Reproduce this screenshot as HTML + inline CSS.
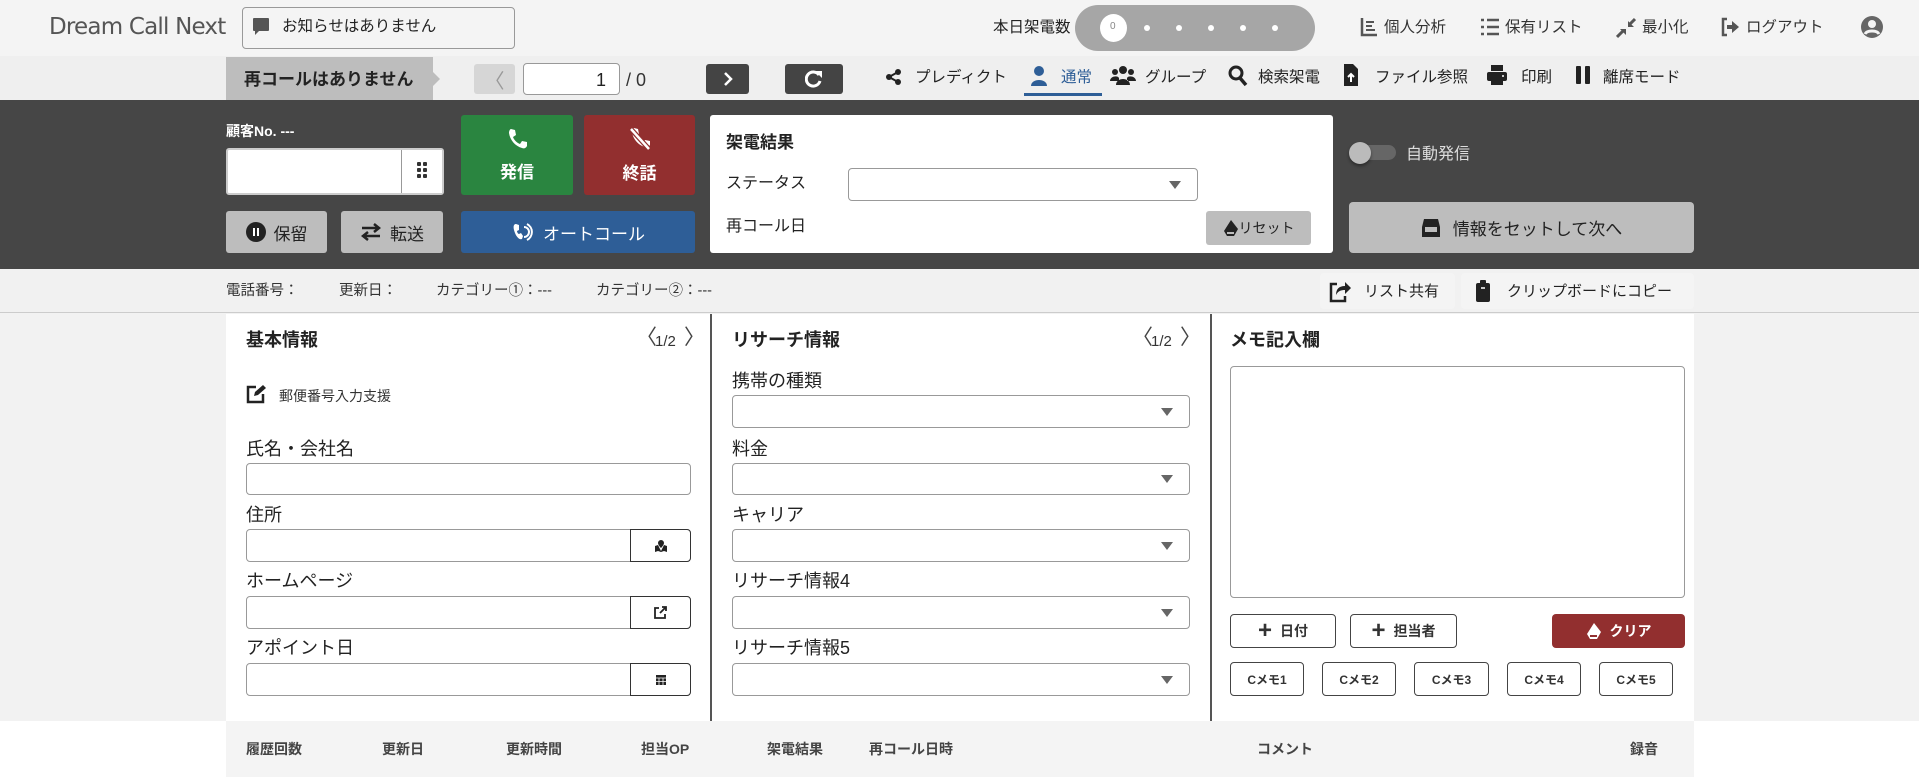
<!DOCTYPE html>
<html><head><meta charset="utf-8"><style>
*{box-sizing:border-box;margin:0;padding:0}
body{width:1919px;height:777px;position:relative;overflow:hidden;background:#f2f2f2;font-family:"Liberation Sans","Noto Sans CJK JP",sans-serif;color:#222;font-size:15px}
.a{position:absolute}
.t{position:absolute;white-space:nowrap;line-height:1}
.btn{position:absolute;display:flex;align-items:center;justify-content:center;border-radius:3px}
.inp{position:absolute;background:#fff;border:1px solid #999;border-radius:4px}
.ib{position:absolute;background:#fff;border:1px solid #333;border-radius:0 4px 4px 0;display:flex;align-items:center;justify-content:center}
.tri{position:absolute;right:16px;top:50%;margin-top:-4px;border-left:6px solid transparent;border-right:6px solid transparent;border-top:8px solid #666}
.ob{position:absolute;background:#fff;border:1px solid #444;border-radius:4px;display:flex;align-items:center;justify-content:center;font-size:13px;font-weight:bold;color:#333}
.lab{position:absolute;font-size:18px;color:#222;white-space:nowrap;line-height:1}
.nv{position:absolute;white-space:nowrap;line-height:1;font-size:15.5px;color:#222;top:70px}
</style></head><body>
<div class="a" style="left:0;top:0;width:1919px;height:56px;background:#f4f4f4"></div>
<div class="t" style="left:49px;top:16px;font-size:23px;color:#555;font-family:'DejaVu Sans',sans-serif;letter-spacing:-0.8px">Dream Call Next</div>
<div class="a" style="left:242px;top:7px;width:273px;height:42px;border:1px solid #999;border-radius:4px;background:#f4f4f4"></div>
<svg class="a" style="left:252px;top:17px" width="18" height="20" viewBox="0 0 18 20"><path d="M2 1h14a1 1 0 0 1 1 1v11a1 1 0 0 1-1 1H7l-4 4v-4H2a1 1 0 0 1-1-1V2a1 1 0 0 1 1-1z" fill="#555"/></svg>
<div class="t" style="left:282px;top:19px;font-size:15.5px">お知らせはありません</div>
<div class="t" style="left:993px;top:20px;font-size:15.5px">本日架電数</div>
<div class="a" style="left:1075px;top:5px;width:240px;height:46px;border-radius:23px;background:#a6a6a6"></div>
<div class="a" style="left:1100px;top:14px;width:27px;height:28px;border-radius:50%;background:#fff"></div>
<div class="t" style="left:1110px;top:22px;font-size:10px;color:#888">0</div>
<div class="a" style="left:1144px;top:25px;width:6px;height:6px;border-radius:50%;background:#fff;box-shadow:32px 0 #fff,64px 0 #fff,96px 0 #fff,128px 0 #fff"></div>
<svg class="a" style="left:1360px;top:17px" width="18" height="20"><path d="M2 1v17h15" stroke="#555" stroke-width="2.5" fill="none"/><path d="M6 5h8M6 9h6M6 13h9" stroke="#555" stroke-width="2"/></svg>
<div class="t" style="left:1384px;top:20px;font-size:15.5px;color:#333">個人分析</div>
<svg class="a" style="left:1480px;top:18px" width="20" height="18"><path d="M1 2h3M7 2h12M1 9h3M7 9h12M1 16h3M7 16h12" stroke="#555" stroke-width="2.5"/></svg>
<div class="t" style="left:1505px;top:20px;font-size:15.5px;color:#333">保有リスト</div>
<svg class="a" style="left:1616px;top:17px" width="20" height="22"><path d="M1 20l7-7M19 2l-6 6" stroke="#555" stroke-width="3"/><path d="M4 12h6v6zM18 10h-6V4z" fill="#555"/></svg>
<div class="t" style="left:1642px;top:20px;font-size:15.5px;color:#333">最小化</div>
<svg class="a" style="left:1720px;top:17px" width="20" height="20"><path d="M7 2H3v16h4" stroke="#555" stroke-width="2.5" fill="none"/><path d="M7 8h5V4l7 6-7 6v-4H7z" fill="#555"/></svg>
<div class="t" style="left:1746px;top:20px;font-size:15.5px;color:#333">ログアウト</div>
<svg class="a" style="left:1861px;top:16px" width="22" height="22"><circle cx="11" cy="11" r="11" fill="#666"/><circle cx="11" cy="8" r="4" fill="#f4f4f4"/><path d="M4 18c2-4 12-4 14 0" stroke="#f4f4f4" stroke-width="3" fill="none"/></svg>
<div class="a" style="left:0;top:56px;width:1919px;height:44px;background:#efefef"></div>
<div class="a" style="left:226px;top:57px;width:207px;height:43px;background:#bdbdbd"></div>
<div class="a" style="left:433px;top:72px;border-top:7px solid transparent;border-bottom:7px solid transparent;border-left:7px solid #bdbdbd"></div>
<div class="t" style="left:244px;top:71px;font-size:17px;font-weight:bold;color:#222">再コールはありません</div>
<div class="btn" style="left:474px;top:64px;width:41px;height:30px;background:#d6d6d6;color:#999;font-size:20px">〈</div>
<div class="inp" style="left:523px;top:63px;width:97px;height:32px;border-radius:4px"></div>
<div class="t" style="left:596px;top:71px;font-size:18px">1</div>
<div class="t" style="left:626px;top:71px;font-size:18px;color:#333">/ 0</div>
<div class="btn" style="left:706px;top:64px;width:43px;height:30px;background:#444"><svg width="12" height="16"><path d="M3 2l6 6-6 6" stroke="#fff" stroke-width="2.5" fill="none"/></svg></div>
<div class="btn" style="left:785px;top:64px;width:58px;height:30px;background:#444"><svg width="18" height="18"><path d="M14 5a7 7 0 1 0 1 6" stroke="#fff" stroke-width="3" fill="none"/><path d="M10 1h7v7z" fill="#fff"/></svg></div>
<svg class="a" style="left:885px;top:68px" width="18" height="18"><circle cx="4" cy="9" r="3" fill="#222"/><circle cx="13" cy="4" r="3" fill="#222"/><circle cx="13" cy="14" r="3" fill="#222"/><path d="M4 9L13 4M4 9l9 5" stroke="#222" stroke-width="2"/></svg>
<div class="nv" style="left:915px">プレディクト</div>
<svg class="a" style="left:1030px;top:65px" width="18" height="22"><circle cx="9" cy="6" r="5" fill="#2e5e97"/><path d="M1 21c0-8 16-8 16 0z" fill="#2e5e97"/></svg>
<div class="nv" style="left:1061px;color:#2e5e97">通常</div>
<div class="a" style="left:1024px;top:93px;width:78px;height:3px;background:#2e5e97"></div>
<svg class="a" style="left:1110px;top:65px" width="26" height="22"><circle cx="13" cy="5" r="4" fill="#222"/><circle cx="5" cy="7" r="3" fill="#222"/><circle cx="21" cy="7" r="3" fill="#222"/><path d="M6 20c0-8 14-8 14 0zM0 16c0-5 8-6 9-3v3zM26 16c0-5-8-6-9-3v3z" fill="#222"/></svg>
<div class="nv" style="left:1145px">グループ</div>
<svg class="a" style="left:1228px;top:65px" width="20" height="22"><circle cx="8" cy="8" r="6" stroke="#222" stroke-width="3" fill="none"/><path d="M12 13l6 7" stroke="#222" stroke-width="3.5"/></svg>
<div class="nv" style="left:1258px">検索架電</div>
<svg class="a" style="left:1343px;top:63px" width="16" height="24"><path d="M1 1h9l5 5v17H1z" fill="#222"/><path d="M8 19v-7M5 14l3-3 3 3" stroke="#fff" stroke-width="2" fill="none"/></svg>
<div class="nv" style="left:1375px">ファイル参照</div>
<svg class="a" style="left:1486px;top:64px" width="22" height="22"><rect x="5" y="1" width="12" height="6" fill="#222"/><rect x="1" y="8" width="20" height="9" rx="2" fill="#222"/><rect x="5" y="15" width="12" height="6" fill="#222"/><circle cx="17" cy="12" r="1" fill="#fff"/></svg>
<div class="nv" style="left:1521px">印刷</div>
<div class="a" style="left:1576px;top:66px;width:5px;height:18px;background:#222;border-radius:1px;box-shadow:9px 0 #222"></div>
<div class="nv" style="left:1603px">離席モード</div>
<div class="a" style="left:0;top:100px;width:1919px;height:169px;background:#464646"></div>
<div class="t" style="left:226px;top:124px;font-size:14px;color:#fff;font-weight:bold">顧客No. ---</div>
<div class="a" style="left:226px;top:148px;width:218px;height:47px;background:#fff;border:2px solid #ccc;border-radius:3px"></div>
<div class="a" style="left:401px;top:150px;width:41px;height:43px;border-left:1px solid #999;background:#fff"></div>
<div class="a" style="left:417px;top:162px;width:4px;height:4px;background:#333;border-radius:1px;box-shadow:6px 0 #333,0 6px #333,6px 6px #333,0 12px #333,6px 12px #333"></div>
<div class="btn" style="left:226px;top:211px;width:101px;height:42px;background:#bdbdbd;font-size:17px;color:#222"><svg width="20" height="20" style="margin-right:8px"><circle cx="10" cy="10" r="10" fill="#222"/><path d="M8 6v8M12 6v8" stroke="#fff" stroke-width="2"/></svg>保留</div>
<div class="btn" style="left:341px;top:211px;width:102px;height:42px;background:#bdbdbd;font-size:17px;color:#222"><svg width="22" height="20" style="margin-right:8px"><path d="M2 6h16M14 2l5 4-5 4M20 14H4M8 10l-5 4 5 4" stroke="#222" stroke-width="2.5" fill="none"/></svg>転送</div>
<div class="btn" style="left:461px;top:115px;width:112px;height:80px;background:#2a8540;flex-direction:column;color:#fff;font-size:17px;font-weight:bold"><svg width="20" height="22" style="margin-bottom:8px"><path d="M4 1l4 1 1 5-3 2c1 3 4 6 7 7l2-3 5 1 0 4c-1 2-3 3-5 2C8 18 3 12 2 5c0-2 1-4 2-4z" fill="#fff"/></svg>発信</div>
<div class="btn" style="left:584px;top:115px;width:111px;height:80px;background:#922f2f;flex-direction:column;color:#fff;font-size:17px;font-weight:bold"><svg width="22" height="24" style="margin-bottom:8px"><path d="M5 1l4 1 1 5-3 2c1 3 4 6 7 7l2-3 5 1v4c-1 2-3 3-5 2C9 18 4 12 3 5c0-2 1-4 2-4z" fill="#fff"/><path d="M1 1l19 21" stroke="#922f2f" stroke-width="5"/><path d="M2 2l18 20" stroke="#fff" stroke-width="2.5"/></svg>終話</div>
<div class="btn" style="left:461px;top:211px;width:234px;height:42px;background:#2e5e97;color:#fff;font-size:17px"><svg width="22" height="22" style="margin-right:10px"><path d="M5 3l3 1v5l-2 1c0 1 1 3 2 3l2-1 2 3-1 3c-2 1-5-1-7-6S2 3 5 3z" fill="#fff"/><path d="M13 6a5 5 0 0 1 0 10M16 3a9 9 0 0 1 0 16" stroke="#fff" stroke-width="2" fill="none"/></svg>オートコール</div>
<div class="a" style="left:710px;top:115px;width:623px;height:138px;background:#fff;border-radius:3px"></div>
<div class="t" style="left:726px;top:134px;font-size:17px;font-weight:bold">架電結果</div>
<div class="t" style="left:726px;top:176px;font-size:16px">ステータス</div>
<div class="inp" style="left:848px;top:168px;width:350px;height:33px"><div class="tri"></div></div>
<div class="t" style="left:726px;top:219px;font-size:16px">再コール日</div>
<div class="btn" style="left:1206px;top:211px;width:105px;height:34px;background:#bdbdbd;font-size:14px;color:#222"><svg width="16" height="18"><path d="M8 1l7 9-4 7H4L1 12z" fill="#222"/><path d="M4 14h7" stroke="#bdbdbd" stroke-width="2"/></svg>リセット</div>
<div class="a" style="left:1350px;top:145px;width:46px;height:15px;border-radius:8px;background:#666"></div>
<div class="a" style="left:1349px;top:142px;width:22px;height:22px;border-radius:50%;background:#bbb;box-shadow:0 2px 3px rgba(0,0,0,.4)"></div>
<div class="t" style="left:1406px;top:147px;font-size:16px;color:#ddd">自動発信</div>
<div class="btn" style="left:1349px;top:202px;width:345px;height:51px;background:#bdbdbd;font-size:17px;color:#222;border-radius:4px"><svg width="20" height="20" style="margin-right:12px"><path d="M3 1h14l2 8v10H1V9z" fill="#222"/><path d="M4 9h12v5H4z" fill="#bdbdbd"/></svg>情報をセットして次へ</div>
<div class="a" style="left:0;top:269px;width:1919px;height:44px;background:#f1f1f1;border-bottom:1px solid #ccc"></div>
<div class="t" style="left:226px;top:284px;font-size:14.5px;color:#333">電話番号：</div>
<div class="t" style="left:339px;top:284px;font-size:14.5px;color:#333">更新日：</div>
<div class="t" style="left:436px;top:284px;font-size:14.5px;color:#333">カテゴリー①：---</div>
<div class="t" style="left:596px;top:284px;font-size:14.5px;color:#333">カテゴリー②：---</div>
<div class="a" style="left:1320px;top:273px;width:135px;height:36px;background:#f4f4f4;border-radius:4px"></div>
<svg class="a" style="left:1329px;top:279px" width="22" height="24"><path d="M8 5H2v17h14v-5" stroke="#222" stroke-width="2.5" fill="none"/><path d="M7 16c0-6 3-9 9-9V3l6 6-6 6v-4c-4 0-7 1-9 5z" fill="#222"/></svg>
<div class="t" style="left:1364px;top:284px;font-size:15px;color:#222">リスト共有</div>
<div class="a" style="left:1461px;top:273px;width:233px;height:36px;background:#f4f4f4;border-radius:4px"></div>
<svg class="a" style="left:1475px;top:279px" width="16" height="24"><rect x="1" y="4" width="14" height="19" rx="2" fill="#222"/><rect x="5" y="1" width="6" height="5" rx="1" fill="#222"/><path d="M6 9h4" stroke="#fff" stroke-width="1.5"/></svg>
<div class="t" style="left:1507px;top:284px;font-size:15px;color:#222">クリップボードにコピー</div>
<div class="a" style="left:226px;top:314px;width:1468px;height:407px;background:#fff"></div>
<div class="a" style="left:710px;top:314px;width:2px;height:407px;background:#555"></div>
<div class="a" style="left:1210px;top:314px;width:2px;height:407px;background:#555"></div>
<div class="t" style="left:246px;top:331px;font-size:18px;font-weight:bold">基本情報</div>
<div class="t" style="left:636px;top:327px;font-size:21px;color:#444">〈</div>
<div class="t" style="left:655px;top:334px;font-size:15px;color:#333">1/2</div>
<div class="t" style="left:684px;top:327px;font-size:21px;color:#444">〉</div>
<svg class="a" style="left:246px;top:384px" width="20" height="20"><path d="M10 3H2v15h15v-8" stroke="#222" stroke-width="2.5" fill="none"/><path d="M8 12l1-4 8-7 3 3-8 7z" fill="#222"/></svg>
<div class="t" style="left:279px;top:389px;font-size:14px;color:#333">郵便番号入力支援</div>
<div class="lab" style="left:246px;top:440px">氏名・会社名</div>
<div class="inp" style="left:246px;top:463px;width:445px;height:32px"></div>
<div class="lab" style="left:246px;top:506px">住所</div>
<div class="inp" style="left:246px;top:529px;width:445px;height:33px"></div>
<div class="ib" style="left:630px;top:529px;width:61px;height:33px"><svg width="14" height="14"><path d="M7 1a3 3 0 0 1 3 3c0 2-3 5-3 5S4 6 4 4a3 3 0 0 1 3-3zM1 7l3-1 3 6 3-6 3 1v6l-3-1-3 1-3-1-3 1z" fill="#222"/></svg></div>
<div class="lab" style="left:246px;top:572px">ホームページ</div>
<div class="inp" style="left:246px;top:596px;width:445px;height:33px"></div>
<div class="ib" style="left:630px;top:596px;width:61px;height:33px"><svg width="13" height="13"><path d="M5 2H1v10h10V8" stroke="#222" stroke-width="1.8" fill="none"/><path d="M6 7l6-6M8 1h4v4" stroke="#222" stroke-width="1.8" fill="none"/></svg></div>
<div class="lab" style="left:246px;top:639px">アポイント日</div>
<div class="inp" style="left:246px;top:663px;width:445px;height:33px"></div>
<div class="ib" style="left:630px;top:663px;width:61px;height:33px"><svg width="12" height="13"><rect x="1" y="2" width="10" height="10" fill="#222"/><path d="M1 5h10M4 5v7M8 5v7M1 8.5h10" stroke="#fff" stroke-width=".8"/></svg></div>
<div class="t" style="left:732px;top:331px;font-size:18px;font-weight:bold">リサーチ情報</div>
<div class="t" style="left:1132px;top:327px;font-size:21px;color:#444">〈</div>
<div class="t" style="left:1151px;top:334px;font-size:15px;color:#333">1/2</div>
<div class="t" style="left:1180px;top:327px;font-size:21px;color:#444">〉</div>
<div class="lab" style="left:732px;top:372px">携帯の種類</div>
<div class="inp" style="left:732px;top:395px;width:458px;height:33px"><div class="tri"></div></div>
<div class="lab" style="left:732px;top:440px">料金</div>
<div class="inp" style="left:732px;top:463px;width:458px;height:32px"><div class="tri"></div></div>
<div class="lab" style="left:732px;top:506px">キャリア</div>
<div class="inp" style="left:732px;top:529px;width:458px;height:33px"><div class="tri"></div></div>
<div class="lab" style="left:732px;top:572px">リサーチ情報4</div>
<div class="inp" style="left:732px;top:596px;width:458px;height:33px"><div class="tri"></div></div>
<div class="lab" style="left:732px;top:639px">リサーチ情報5</div>
<div class="inp" style="left:732px;top:663px;width:458px;height:33px"><div class="tri"></div></div>
<div class="t" style="left:1230px;top:331px;font-size:18px;font-weight:bold">メモ記入欄</div>
<div class="inp" style="left:1230px;top:366px;width:455px;height:232px;border-color:#999"></div>
<div class="ob" style="left:1230px;top:614px;width:106px;height:34px;font-size:14px"><span style="font-size:24px;font-weight:bold;margin-right:8px">+</span>日付</div>
<div class="ob" style="left:1350px;top:614px;width:107px;height:34px;font-size:14px"><span style="font-size:24px;font-weight:bold;margin-right:8px">+</span>担当者</div>
<div class="btn" style="left:1552px;top:614px;width:133px;height:34px;background:#922f2f;color:#fff;font-size:14px;font-weight:bold;border-radius:4px"><svg width="16" height="18" style="margin-right:8px"><path d="M8 1l7 9-4 7H4L1 12z" fill="#fff"/><path d="M4 14h7" stroke="#922f2f" stroke-width="2"/></svg>クリア</div>
<div class="ob" style="left:1230px;top:662px;width:74px;height:34px;font-size:12px">Cメモ1</div>
<div class="ob" style="left:1322px;top:662px;width:74px;height:34px;font-size:12px">Cメモ2</div>
<div class="ob" style="left:1414px;top:662px;width:75px;height:34px;font-size:12px">Cメモ3</div>
<div class="ob" style="left:1507px;top:662px;width:74px;height:34px;font-size:12px">Cメモ4</div>
<div class="ob" style="left:1599px;top:662px;width:74px;height:34px;font-size:12px">Cメモ5</div>
<div class="a" style="left:0;top:721px;width:1919px;height:56px;background:#fff"></div>
<div class="a" style="left:226px;top:721px;width:1468px;height:56px;background:#f4f4f4"></div>
<div class="t" style="left:246px;top:742px;font-size:14px;color:#444;font-weight:bold">履歴回数</div>
<div class="t" style="left:382px;top:742px;font-size:14px;color:#444;font-weight:bold">更新日</div>
<div class="t" style="left:506px;top:742px;font-size:14px;color:#444;font-weight:bold">更新時間</div>
<div class="t" style="left:641px;top:742px;font-size:14px;color:#444;font-weight:bold">担当OP</div>
<div class="t" style="left:767px;top:742px;font-size:14px;color:#444;font-weight:bold">架電結果</div>
<div class="t" style="left:869px;top:742px;font-size:14px;color:#444;font-weight:bold">再コール日時</div>
<div class="t" style="left:1257px;top:742px;font-size:14px;color:#444;font-weight:bold">コメント</div>
<div class="t" style="left:1630px;top:742px;font-size:14px;color:#444;font-weight:bold">録音</div>
</body></html>
